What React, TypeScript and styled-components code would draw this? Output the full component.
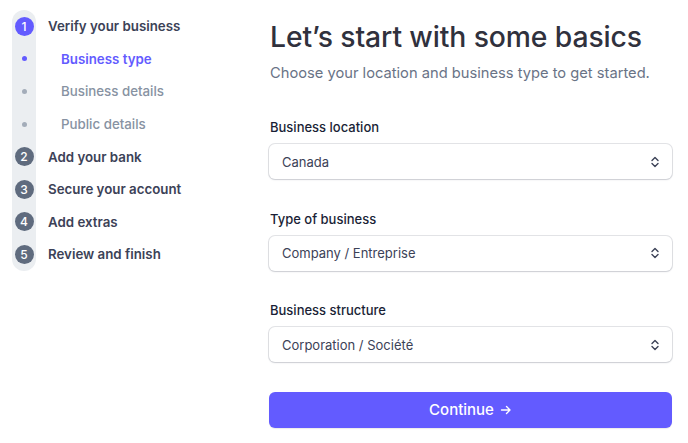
import React from "react";
import styled, { createGlobalStyle, css } from "styled-components";

const Global = createGlobalStyle`
  html, body { margin: 0; padding: 0; background: #ffffff; }
  body { font-family: Inter, "Noto Sans", sans-serif; -webkit-font-smoothing: antialiased; }
  * { box-sizing: border-box; }
`;

const Page = styled.div`
  display: flex;
  width: 688px;
  height: 443px;
  padding: 10px 0 0 12px;
  overflow: hidden;
`;

const Sidebar = styled.nav`
  width: 258px;
  flex-shrink: 0;
  display: flex;
  flex-direction: column;
`;

const StepRow = styled.div`
  display: flex;
  align-items: center;
  height: 32.6px;
`;

const MarkerCell = styled.div<{ $pos: "first" | "middle" | "last" }>`
  width: 24px;
  height: 100%;
  display: flex;
  align-items: center;
  justify-content: center;
  background: #ebeef1;
  ${(p) =>
    p.$pos === "first" &&
    css`
      border-radius: 12px 12px 0 0;
    `}
  ${(p) =>
    p.$pos === "last" &&
    css`
      border-radius: 0 0 12px 12px;
    `}
`;

const NumberCircle = styled.span<{ $active?: boolean }>`
  width: 19px;
  height: 19px;
  border-radius: 50%;
  background: ${(p) => (p.$active ? "#635bff" : "#5f6b7e")};
  color: #ffffff;
  font-size: 12px;
  font-weight: 500;
  display: flex;
  align-items: center;
  justify-content: center;
`;

const Dot = styled.span<{ $active?: boolean }>`
  width: 5px;
  height: 5px;
  border-radius: 50%;
  background: ${(p) => (p.$active ? "#635bff" : "#a3acb9")};
`;

const StepLabel = styled.span<{ $sub?: boolean; $active?: boolean }>`
  margin-left: ${(p) => (p.$sub ? "25px" : "12px")};
  font-size: 13.3px;
  font-weight: ${(p) => (p.$sub && !p.$active ? 500 : 600)};
  color: ${(p) => (p.$active ? "#635bff" : p.$sub ? "#8792a2" : "#3c4257")};
`;

const Main = styled.main`
  width: 404px;
  padding-top: 9px;
  display: flex;
  flex-direction: column;
`;

const Title = styled.h1`
  margin: 0;
  font-size: 28.3px;
  line-height: 36px;
  font-weight: 500;
  color: #30313d;
  letter-spacing: -0.1px;
`;

const Subtitle = styled.p`
  margin: 8px 0 0;
  font-size: 14.7px;
  line-height: 20px;
  color: #697386;
`;

const Form = styled.form`
  margin-top: 35px;
  margin-left: -1px;
  display: flex;
  flex-direction: column;
  gap: 30.5px;
`;

const Field = styled.label`
  display: flex;
  flex-direction: column;
  gap: 8px;
`;

const FieldLabel = styled.span`
  padding-left: 1px;
  font-size: 13px;
  line-height: 18px;
  font-weight: 500;
  color: #1a1f36;
`;

const SelectBox = styled.div`
  width: 403px;
  height: 35px;
  border-radius: 6px;
  background: #ffffff;
  box-shadow: 0 0 0 1px rgba(60, 66, 87, 0.14), 0 1px 2px rgba(60, 66, 87, 0.14);
  display: flex;
  align-items: center;
  justify-content: space-between;
  padding: 0 12px 0 13px;
  font-size: 13px;
  color: #3c4257;
`;

const Button = styled.button`
  width: 403px;
  margin-top: -1px;
  height: 36px;
  border: none;
  border-radius: 6px;
  background: #635bff;
  color: #ffffff;
  font-family: inherit;
  font-size: 15px;
  font-weight: 500;
  display: flex;
  align-items: center;
  justify-content: center;
  gap: 6px;
  box-shadow: 0 1px 1px rgba(0, 0, 0, 0.08);
`;

const Chevrons = () => (
  <svg width="10" height="12" viewBox="0 0 10 12" fill="none">
    <path d="M2 4.5 L5 1.5 L8 4.5" stroke="#3c4257" strokeWidth="1.4" strokeLinecap="round" strokeLinejoin="round" />
    <path d="M2 7.5 L5 10.5 L8 7.5" stroke="#3c4257" strokeWidth="1.4" strokeLinecap="round" strokeLinejoin="round" />
  </svg>
);

const Arrow = () => (
  <svg width="12" height="12" viewBox="0 0 12 12" fill="none">
    <path d="M1.5 6 H10 M6.5 2.5 L10 6 L6.5 9.5" stroke="#ffffff" strokeWidth="1.4" strokeLinecap="round" strokeLinejoin="round" />
  </svg>
);

type Step = { kind: "num"; n: number; label: string; active?: boolean } | { kind: "sub"; label: string; active?: boolean };

const steps: Step[] = [
  { kind: "num", n: 1, label: "Verify your business", active: true },
  { kind: "sub", label: "Business type", active: true },
  { kind: "sub", label: "Business details" },
  { kind: "sub", label: "Public details" },
  { kind: "num", n: 2, label: "Add your bank" },
  { kind: "num", n: 3, label: "Secure your account" },
  { kind: "num", n: 4, label: "Add extras" },
  { kind: "num", n: 5, label: "Review and finish" },
];

const fields = [
  { label: "Business location", value: "Canada" },
  { label: "Type of business", value: "Company / Entreprise" },
  { label: "Business structure", value: "Corporation / Société" },
];

export default function App() {
  return (
    <>
      <Global />
      <Page>
        <Sidebar>
          {steps.map((s, i) => (
            <StepRow key={i}>
              <MarkerCell $pos={i === 0 ? "first" : i === steps.length - 1 ? "last" : "middle"}>
                {s.kind === "num" ? (
                  <NumberCircle $active={s.active}>{s.n}</NumberCircle>
                ) : (
                  <Dot $active={s.active} />
                )}
              </MarkerCell>
              <StepLabel $sub={s.kind === "sub"} $active={s.kind === "sub" && s.active}>
                {s.label}
              </StepLabel>
            </StepRow>
          ))}
        </Sidebar>
        <Main>
          <Title>Let’s start with some basics</Title>
          <Subtitle>Choose your location and business type to get started.</Subtitle>
          <Form onSubmit={(e) => e.preventDefault()}>
            {fields.map((f) => (
              <Field key={f.label}>
                <FieldLabel>{f.label}</FieldLabel>
                <SelectBox>
                  <span>{f.value}</span>
                  <Chevrons />
                </SelectBox>
              </Field>
            ))}
            <Button type="submit">
              Continue <Arrow />
            </Button>
          </Form>
        </Main>
      </Page>
    </>
  );
}
